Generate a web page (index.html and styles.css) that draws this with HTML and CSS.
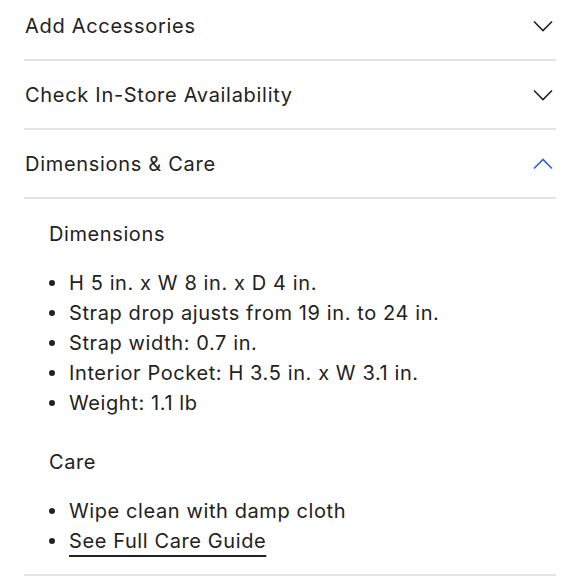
FILE: index.html
```html
<!DOCTYPE html>
<html lang="en">
<head>
<meta charset="utf-8">
<title>Dimensions &amp; Care</title>
<link rel="stylesheet" href="styles.css">
</head>
<body>
<div class="accordion">
  <div class="item">
    <div class="header">
      <span class="title">Add Accessories</span>
      <svg class="chev" width="20" height="12" viewBox="0 0 20 12"><path d="M1 1.5 L10 10.5 L19 1.5" fill="none" stroke="#222" stroke-width="1.6"/></svg>
    </div>
  </div>
  <div class="item">
    <div class="header">
      <span class="title">Check In-Store Availability</span>
      <svg class="chev" width="20" height="12" viewBox="0 0 20 12"><path d="M1 1.5 L10 10.5 L19 1.5" fill="none" stroke="#222" stroke-width="1.6"/></svg>
    </div>
  </div>
  <div class="item">
    <div class="header">
      <span class="title">Dimensions &amp; Care</span>
      <svg class="chev" width="20" height="12" viewBox="0 0 20 12"><path d="M1 10.5 L10 1.5 L19 10.5" fill="none" stroke="#2a66c4" stroke-width="1.6"/></svg>
    </div>
  </div>
  <div class="item open">
    <div class="panel">
      <h3 class="sub">Dimensions</h3>
      <ul class="list">
        <li>H 5 in. x W 8 in. x D 4 in.</li>
        <li>Strap drop ajusts from 19 in. to 24 in.</li>
        <li>Strap width: 0.7 in.</li>
        <li>Interior Pocket: H 3.5 in. x W 3.1 in.</li>
        <li>Weight: 1.1 lb</li>
      </ul>
      <h3 class="sub care">Care</h3>
      <ul class="list">
        <li>Wipe clean with damp cloth</li>
        <li><a class="link" href="#">See Full Care Guide</a></li>
      </ul>
    </div>
  </div>
</div>
</body>
</html>
```
FILE: styles.css
```css
html, body {
  margin: 0;
  padding: 0;
  background: #fff;
}
body {
  font-family: Inter, "Liberation Sans", sans-serif;
  color: #222;
  overflow: hidden;
}
.accordion {
  margin: -8px 24px 0 24px;
}
.item {
  border-bottom: 2px solid #e3e4e5;
}
.header {
  height: 67px;
  display: flex;
  align-items: center;
  justify-content: space-between;
  padding-left: 1px;
  padding-right: 3px;
}
.title {
  font-size: 20px;
  letter-spacing: 0.7px;
}
.chev {
  display: block;
}
.panel {
  padding: 20px 24px 18px 25px;
}
.sub {
  margin: 0;
  font-weight: normal;
  font-size: 20px;
  line-height: 30px;
  letter-spacing: 0.6px;
}
.sub.care {
  margin-top: 29px;
}
.list {
  list-style: none;
  margin: 19px 0 0 0;
  padding: 0;
}
.list li {
  display: flex;
  align-items: center;
  font-size: 20px;
  line-height: 30px;
  letter-spacing: 0.6px;
}
.list li::before {
  content: "";
  width: 6px;
  height: 6px;
  border-radius: 50%;
  background: #222;
  margin-right: 14px;
  flex: none;
}
.link {
  color: #222;
  text-decoration: underline;
  text-decoration-thickness: 2px;
  text-underline-offset: 7px;
}
```
